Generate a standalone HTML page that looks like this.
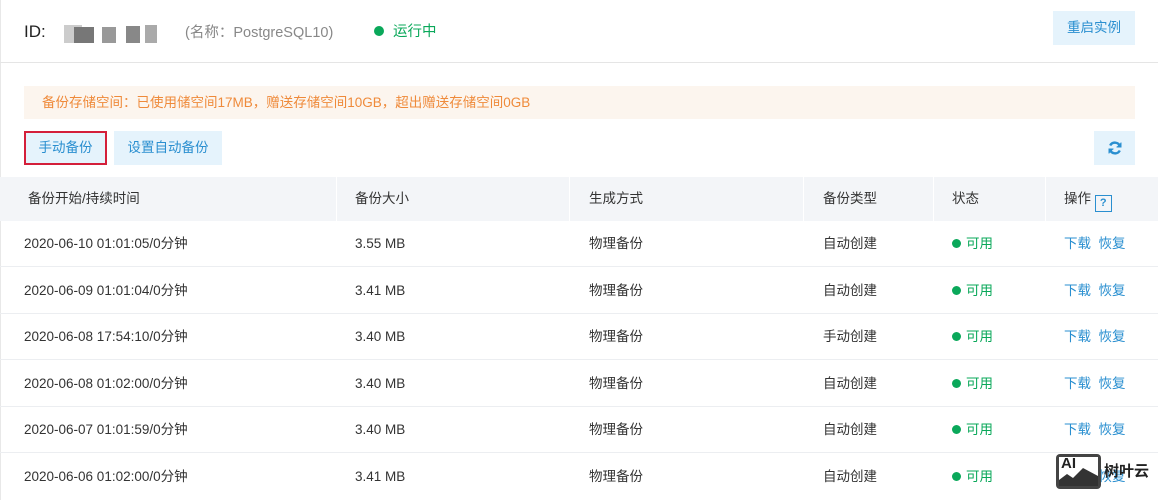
<!DOCTYPE html>
<html><head><meta charset="utf-8"><style>
*{margin:0;padding:0;box-sizing:border-box}
body{width:1158px;height:500px;overflow:hidden;background:#fff;font-family:"Liberation Sans","Noto Sans CJK SC",sans-serif;font-size:13.5px;color:#333;position:relative;line-height:16px}
.a{position:absolute;white-space:nowrap}
.btn{position:absolute;background:#e5f3fc;color:#2a8fd0;font-size:13.5px;display:flex;align-items:center;justify-content:center;line-height:16px}
.row{position:absolute;left:0;width:1158px;height:46px;border-bottom:1px solid #eceef1}
.row span{position:absolute;top:15px;white-space:nowrap;line-height:16px;height:16px}
.dot{display:inline-block;width:9px;height:9px;border-radius:50%;background:#0aa85a;margin-right:5px;vertical-align:0px}
.th{position:absolute;top:177px;height:44px;background:#f3f5f8;border-right:1px solid #fff}
.th span{position:absolute;top:14px;left:20px;white-space:nowrap;line-height:16px}
</style></head><body>
<div style="position:absolute;left:0;top:0;width:1px;height:500px;background:#e8e8e8"></div>
<div class="a" style="left:24px;top:22px;font-size:17px;line-height:20px;color:#222">ID:</div>
<div class="a" style="left:64px;top:25px;width:18px;height:18px;background:#ccc"></div>
<div class="a" style="left:74px;top:27px;width:20px;height:16px;background:#777"></div>
<div class="a" style="left:102px;top:27px;width:14px;height:16px;background:#999"></div>
<div class="a" style="left:126px;top:26px;width:14px;height:17px;background:#888"></div>
<div class="a" style="left:145px;top:25px;width:12px;height:18px;background:#aaa"></div>
<div class="a" style="left:185px;top:24px;font-size:14.5px;line-height:18px;color:#888">(名称：PostgreSQL10)</div>
<div class="a" style="left:374px;top:23px;font-size:14.5px;line-height:18px;color:#0aa85a"><span class="dot" style="width:10px;height:10px;margin-right:9px"></span>运行中</div>
<div class="btn" style="left:1053px;top:11px;width:82px;height:34px">重启实例</div>
<div style="position:absolute;left:0;top:62px;width:1158px;height:1px;background:#e5e5e5"></div>
<div class="a" style="left:24px;top:86px;width:1111px;height:33px;background:#fcf5ee;color:#ef8a3a;padding:9px 0 0 18px;line-height:16px">备份存储空间：已使用储空间17MB，赠送存储空间10GB，超出赠送存储空间0GB</div>
<div class="btn" style="left:24px;top:131px;width:83px;height:34px;border:2px solid #d41f3a">手动备份</div>
<div class="btn" style="left:114px;top:131px;width:108px;height:34px">设置自动备份</div>
<div class="btn" style="left:1094px;top:131px;width:41px;height:34px"><svg width="16" height="16" viewBox="0 0 16 16" fill="none" stroke="#2a8fd0" stroke-width="2.4"><path d="M13 6.5A5.3 5.3 0 0 0 3.2 5.5"/><path d="M3 9.5A5.3 5.3 0 0 0 12.8 10.5"/><path d="M14 2.5v4.5h-4.5" fill="#2a8fd0" stroke-width="1"/><path d="M2 13.5V9h4.5" fill="#2a8fd0" stroke-width="1"/></svg></div>
<div class="th" style="left:0;width:337px"><span style="left:28px">备份开始/持续时间</span></div>
<div class="th" style="left:337px;width:233px"><span style="left:18px">备份大小</span></div>
<div class="th" style="left:570px;width:234px"><span style="left:19px">生成方式</span></div>
<div class="th" style="left:804px;width:130px"><span style="left:19px">备份类型</span></div>
<div class="th" style="left:934px;width:112px"><span style="left:18px">状态</span></div>
<div class="th" style="left:1046px;width:112px;border:0"><span style="left:18px">操作 <span style="position:static;display:inline-block;width:17px;height:17px;border:1.5px solid #2a8fd0;color:#2a8fd0;font-size:11px;font-weight:bold;text-align:center;line-height:14px;vertical-align:-3px">?</span></span></div>
<div class="row" style="top:221px"><span style="left:24px">2020-06-10 01:01:05/0分钟</span><span style="left:355px">3.55 MB</span><span style="left:589px">物理备份</span><span style="left:823px">自动创建</span><span style="left:952px;color:#0aa85a"><i class="dot"></i>可用</span><span style="left:1064px;color:#2a8fd0">下载&nbsp;&nbsp;恢复</span></div>
<div class="row" style="top:268px"><span style="left:24px">2020-06-09 01:01:04/0分钟</span><span style="left:355px">3.41 MB</span><span style="left:589px">物理备份</span><span style="left:823px">自动创建</span><span style="left:952px;color:#0aa85a"><i class="dot"></i>可用</span><span style="left:1064px;color:#2a8fd0">下载&nbsp;&nbsp;恢复</span></div>
<div class="row" style="top:314px"><span style="left:24px">2020-06-08 17:54:10/0分钟</span><span style="left:355px">3.40 MB</span><span style="left:589px">物理备份</span><span style="left:823px">手动创建</span><span style="left:952px;color:#0aa85a"><i class="dot"></i>可用</span><span style="left:1064px;color:#2a8fd0">下载&nbsp;&nbsp;恢复</span></div>
<div class="row" style="top:361px"><span style="left:24px">2020-06-08 01:02:00/0分钟</span><span style="left:355px">3.40 MB</span><span style="left:589px">物理备份</span><span style="left:823px">自动创建</span><span style="left:952px;color:#0aa85a"><i class="dot"></i>可用</span><span style="left:1064px;color:#2a8fd0">下载&nbsp;&nbsp;恢复</span></div>
<div class="row" style="top:407px"><span style="left:24px">2020-06-07 01:01:59/0分钟</span><span style="left:355px">3.40 MB</span><span style="left:589px">物理备份</span><span style="left:823px">自动创建</span><span style="left:952px;color:#0aa85a"><i class="dot"></i>可用</span><span style="left:1064px;color:#2a8fd0">下载&nbsp;&nbsp;恢复</span></div>
<div class="row" style="top:454px;border:0"><span style="left:24px">2020-06-06 01:02:00/0分钟</span><span style="left:355px">3.41 MB</span><span style="left:589px">物理备份</span><span style="left:823px">自动创建</span><span style="left:952px;color:#0aa85a"><i class="dot"></i>可用</span><span style="left:1064px;color:#2a8fd0">下载&nbsp;&nbsp;恢复</span></div>
<div class="a" style="left:1056px;top:454px;width:45px;height:35px;background:#444;border-radius:4px;overflow:hidden">
<div style="position:absolute;left:3px;top:3px;width:39px;height:29px;background:#fff"></div>
<div class="a" style="left:5px;top:2px;font-size:15px;font-weight:bold;color:#222">AI</div>
<svg class="a" style="left:3px;top:12px" width="39" height="20"><path d="M0 20V14L8 8L14 12L24 2L39 10V20Z" fill="#333"/></svg>
</div>
<div class="a" style="left:1104px;top:464px;font-size:15px;font-weight:bold;color:#222">树叶云</div>
</body></html>
